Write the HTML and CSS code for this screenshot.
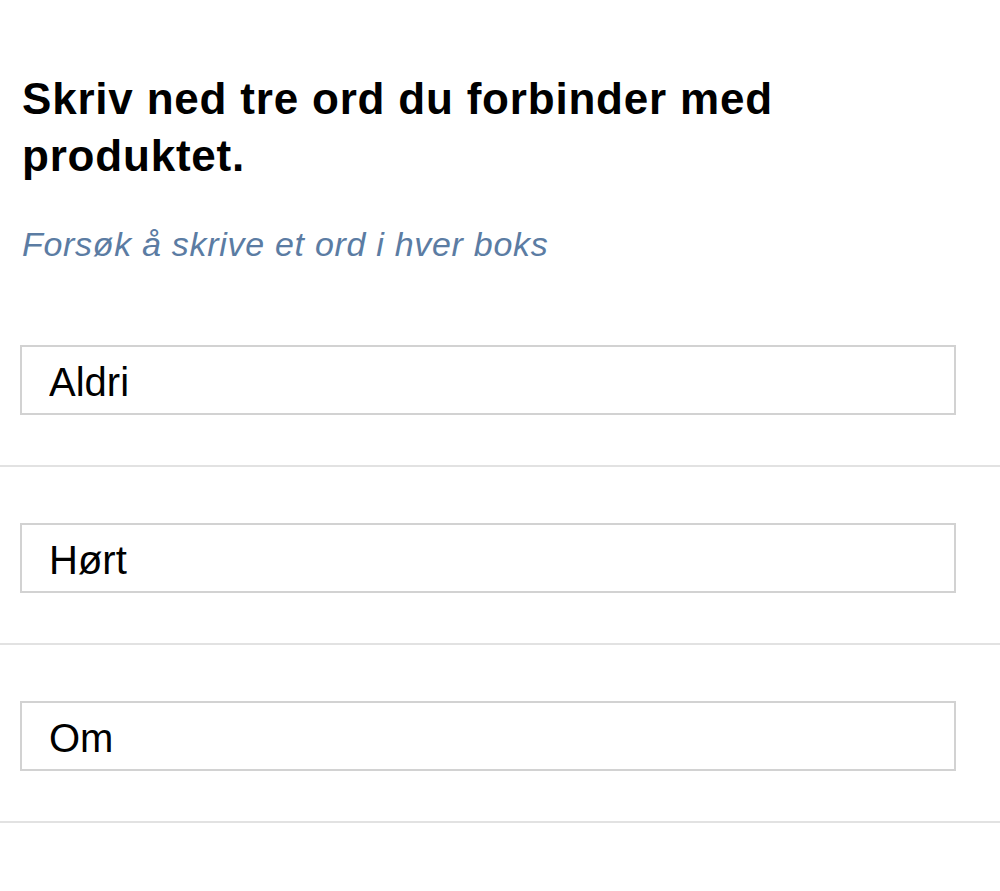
FILE: index.html
```html
<!DOCTYPE html>
<html lang="no">
<head>
<meta charset="UTF-8">
<title>Tre ord</title>
<link rel="stylesheet" href="styles.css">
</head>
<body>

  <div class="sporsmal">
    <h1>Skriv ned tre ord du forbinder med produktet.</h1>
    <p class="hint">Forsøk å skrive et ord i hver boks</p>
  </div>

  <div class="svar">
    <div class="rad"><input class="felt" type="text" value="Aldri"></div>
    <div class="rad"><input class="felt" type="text" value="Hørt"></div>
    <div class="rad"><input class="felt" type="text" value="Om"></div>
  </div>

</body>
</html>
```

FILE: styles.css
```css
:root {
  --tekst: #000;
  --hint: #5b7ca3;
  --kant: #d2d2d2;
  --linje: #e2e2e2;
}
html, body {
  margin: 0;
  padding: 0;
  background: #fff;
  color: var(--tekst);
  font-family: 'Liberation Sans', Arial, sans-serif;
}
.sporsmal {
  padding: 70px 44px 0 22px;
}
h1 {
  margin: 0;
  font-size: 44px;
  line-height: 57px;
  font-weight: 700;
  letter-spacing: 0.8px;
}
.hint {
  margin: 40px 0 25px;
  font-size: 34px;
  line-height: 40px;
  font-style: italic;
  letter-spacing: 0.7px;
  color: var(--hint);
}
.rad {
  padding: 56px 44px 50px 20px;
  border-bottom: 2px solid var(--linje);
}
.felt {
  display: block;
  box-sizing: border-box;
  width: 100%;
  height: 70px;
  margin: 0;
  padding: 4px 20px 0 27px;
  border: 2px solid var(--kant);
  border-radius: 0;
  background: #fff;
  font-family: inherit;
  font-size: 40px;
  color: var(--tekst);
  outline: none;
}
```
